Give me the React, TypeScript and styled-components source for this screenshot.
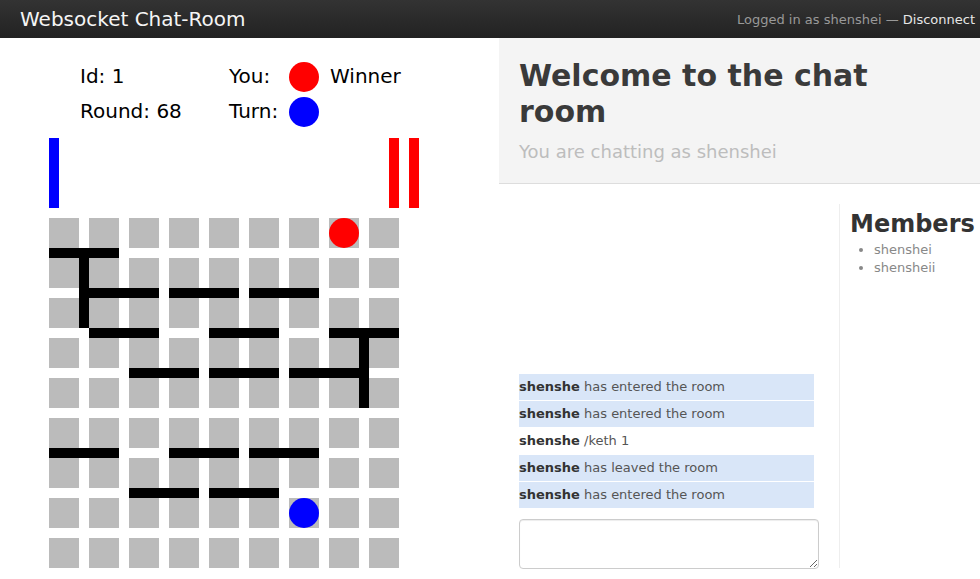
import React from "react";
import styled, { createGlobalStyle } from "styled-components";

const Global = createGlobalStyle`
  html, body { margin: 0; padding: 0; background: #fff; }
  body { font-family: "DejaVu Sans", "Liberation Sans", sans-serif; overflow: hidden; }
  * { box-sizing: border-box; }
`;

const Page = styled.div`
  width: 980px;
  height: 579px;
  overflow: hidden;
  display: flex;
  flex-direction: column;
`;

const TopBar = styled.header`
  height: 38px;
  flex: none;
  background: linear-gradient(#333333, #222222);
  display: flex;
  align-items: center;
  justify-content: space-between;
  padding: 0 5px 0 20px;
`;

const Brand = styled.div`
  font-size: 20px;
  color: #f5f5f5;
  margin-top: -1px;
`;

const LoginInfo = styled.div`
  font-size: 13px;
  color: #999;
`;

const DisconnectLink = styled.a`
  color: #e6e6e6;
  text-decoration: none;
`;

const Main = styled.div`
  flex: 1;
  display: flex;
  min-height: 0;
`;

const GamePanel = styled.section`
  width: 499px;
  flex: none;
  padding: 21px 0 0 49px;
`;

const InfoGrid = styled.div`
  display: grid;
  grid-template-columns: 149px 60px 41px auto;
  grid-auto-rows: 35px;
  align-items: center;
  padding-left: 31px;
  font-size: 20px;
  line-height: 33px;
  color: #000;
`;

const Pawn = styled.span<{ $color: string }>`
  display: block;
  width: 30px;
  height: 30px;
  border-radius: 50%;
  background: ${(p) => p.$color};
`;

const WallStock = styled.div`
  width: 370px;
  height: 70px;
  margin-top: 9px;
  display: flex;
  justify-content: space-between;
`;

const BarGroup = styled.div`
  display: flex;
  gap: 10px;
`;

const WallBar = styled.span<{ $color: string }>`
  display: block;
  width: 10px;
  height: 70px;
  background: ${(p) => p.$color};
`;

const BoardSvg = styled.svg`
  display: block;
  margin-top: 10px;
`;

const ChatPanel = styled.section`
  flex: 1;
  display: flex;
  flex-direction: column;
  min-width: 0;
`;

const Hero = styled.div`
  background: #f4f4f4;
  border-bottom: 1px solid #dddddd;
  padding: 20px 20px 18px 20px;
`;

const HeroTitle = styled.h1`
  margin: 0;
  width: 400px;
  font-size: 30px;
  line-height: 36px;
  font-weight: bold;
  color: #3a3a3a;
`;

const HeroSub = styled.p`
  margin: 8px 0 0 0;
  font-size: 18px;
  line-height: 27px;
  color: #bdbdbd;
`;

const ChatBody = styled.div`
  flex: 1;
  display: flex;
  padding: 20px 0 0 20px;
  min-height: 0;
`;

const ChatColumn = styled.div`
  width: 320px;
  flex: none;
  display: flex;
  flex-direction: column;
`;

const MessageList = styled.div`
  height: 305px;
  width: 295px;
  display: flex;
  flex-direction: column;
  justify-content: flex-end;
`;

const Message = styled.div<{ $highlight: boolean }>`
  height: 27px;
  line-height: 26px;
  border-bottom: 1px solid #fff;
  background: ${(p) => (p.$highlight ? "#d9e6f8" : "#fff")};
  font-size: 13px;
  color: #555;
  white-space: nowrap;
`;

const Author = styled.b`
  color: #333;
`;

const Composer = styled.textarea`
  margin-top: 10px;
  width: 300px;
  height: 50px;
  border: 1px solid #cccccc;
  border-radius: 4px;
  box-shadow: inset 0 1px 1px rgba(0, 0, 0, 0.075);
  font-family: inherit;
  font-size: 13px;
  padding: 4px 6px;
  resize: both;
`;

const Members = styled.aside`
  flex: 1;
  border-left: 1px solid #eeeeee;
  padding-left: 10px;
  height: 364px;
  white-space: nowrap;
`;

const MembersTitle = styled.h2`
  margin: 0;
  padding-top: 4px;
  font-size: 24px;
  line-height: 32px;
  font-weight: bold;
  color: #333;
`;

const MemberList = styled.ul`
  margin: 1px 0 0 0;
  padding-left: 24px;
  font-size: 13px;
  line-height: 18px;
  color: #888;
  li::marker {
    color: #888;
  }
`;

const cells = Array.from({ length: 81 }, (_, i) => ({ r: Math.floor(i / 9), c: i % 9 }));

const hWalls: [number, number][] = [
  [0, 0], [1, 1], [1, 3], [1, 5], [2, 1], [2, 4], [2, 7],
  [3, 2], [3, 4], [3, 6], [5, 0], [5, 3], [5, 5], [6, 2], [6, 4],
];
const vWalls: [number, number][] = [
  [0, 1], [7, 3],
];

const messages = [
  { text: "has entered the room", hl: true },
  { text: "has entered the room", hl: true },
  { text: "/keth 1", hl: false },
  { text: "has leaved the room", hl: true },
  { text: "has entered the room", hl: true },
];

export default function App() {
  return (
    <Page>
      <Global />
      <TopBar>
        <Brand>Websocket Chat-Room</Brand>
        <LoginInfo>
          Logged in as shenshei — <DisconnectLink href="#">Disconnect</DisconnectLink>
        </LoginInfo>
      </TopBar>
      <Main>
        <GamePanel>
          <InfoGrid>
            <span>Id: 1</span>
            <span>You:</span>
            <Pawn $color="#ff0000" />
            <span>Winner</span>
            <span>Round: 68</span>
            <span>Turn:</span>
            <Pawn $color="#0000ff" />
            <span />
          </InfoGrid>
          <WallStock>
            <BarGroup>
              <WallBar $color="#0000ff" />
            </BarGroup>
            <BarGroup>
              <WallBar $color="#ff0000" />
              <WallBar $color="#ff0000" />
            </BarGroup>
          </WallStock>
          <BoardSvg width="350" height="350" viewBox="0 0 350 350">
            {cells.map(({ r, c }) => (
              <rect key={`c${r}-${c}`} x={c * 40} y={r * 40} width="30" height="30" fill="#bbbbbb" />
            ))}
            {hWalls.map(([r, c]) => (
              <rect key={`h${r}-${c}`} x={c * 40} y={r * 40 + 30} width="70" height="10" fill="#000" />
            ))}
            {vWalls.map(([c, r]) => (
              <rect key={`v${c}-${r}`} x={c * 40 + 30} y={r * 40} width="10" height="70" fill="#000" />
            ))}
            <circle cx={7 * 40 + 15} cy={15} r="15" fill="#ff0000" />
            <circle cx={6 * 40 + 15} cy={7 * 40 + 15} r="15" fill="#0000ff" />
          </BoardSvg>
        </GamePanel>
        <ChatPanel>
          <Hero>
            <HeroTitle>Welcome to the chat room</HeroTitle>
            <HeroSub>You are chatting as shenshei</HeroSub>
          </Hero>
          <ChatBody>
            <ChatColumn>
              <MessageList>
                {messages.map((m, i) => (
                  <Message key={i} $highlight={m.hl}>
                    <Author>shenshe</Author> {m.text}
                  </Message>
                ))}
              </MessageList>
              <Composer />
            </ChatColumn>
            <Members>
              <MembersTitle>Members</MembersTitle>
              <MemberList>
                <li>shenshei</li>
                <li>shensheii</li>
              </MemberList>
            </Members>
          </ChatBody>
        </ChatPanel>
      </Main>
    </Page>
  );
}
